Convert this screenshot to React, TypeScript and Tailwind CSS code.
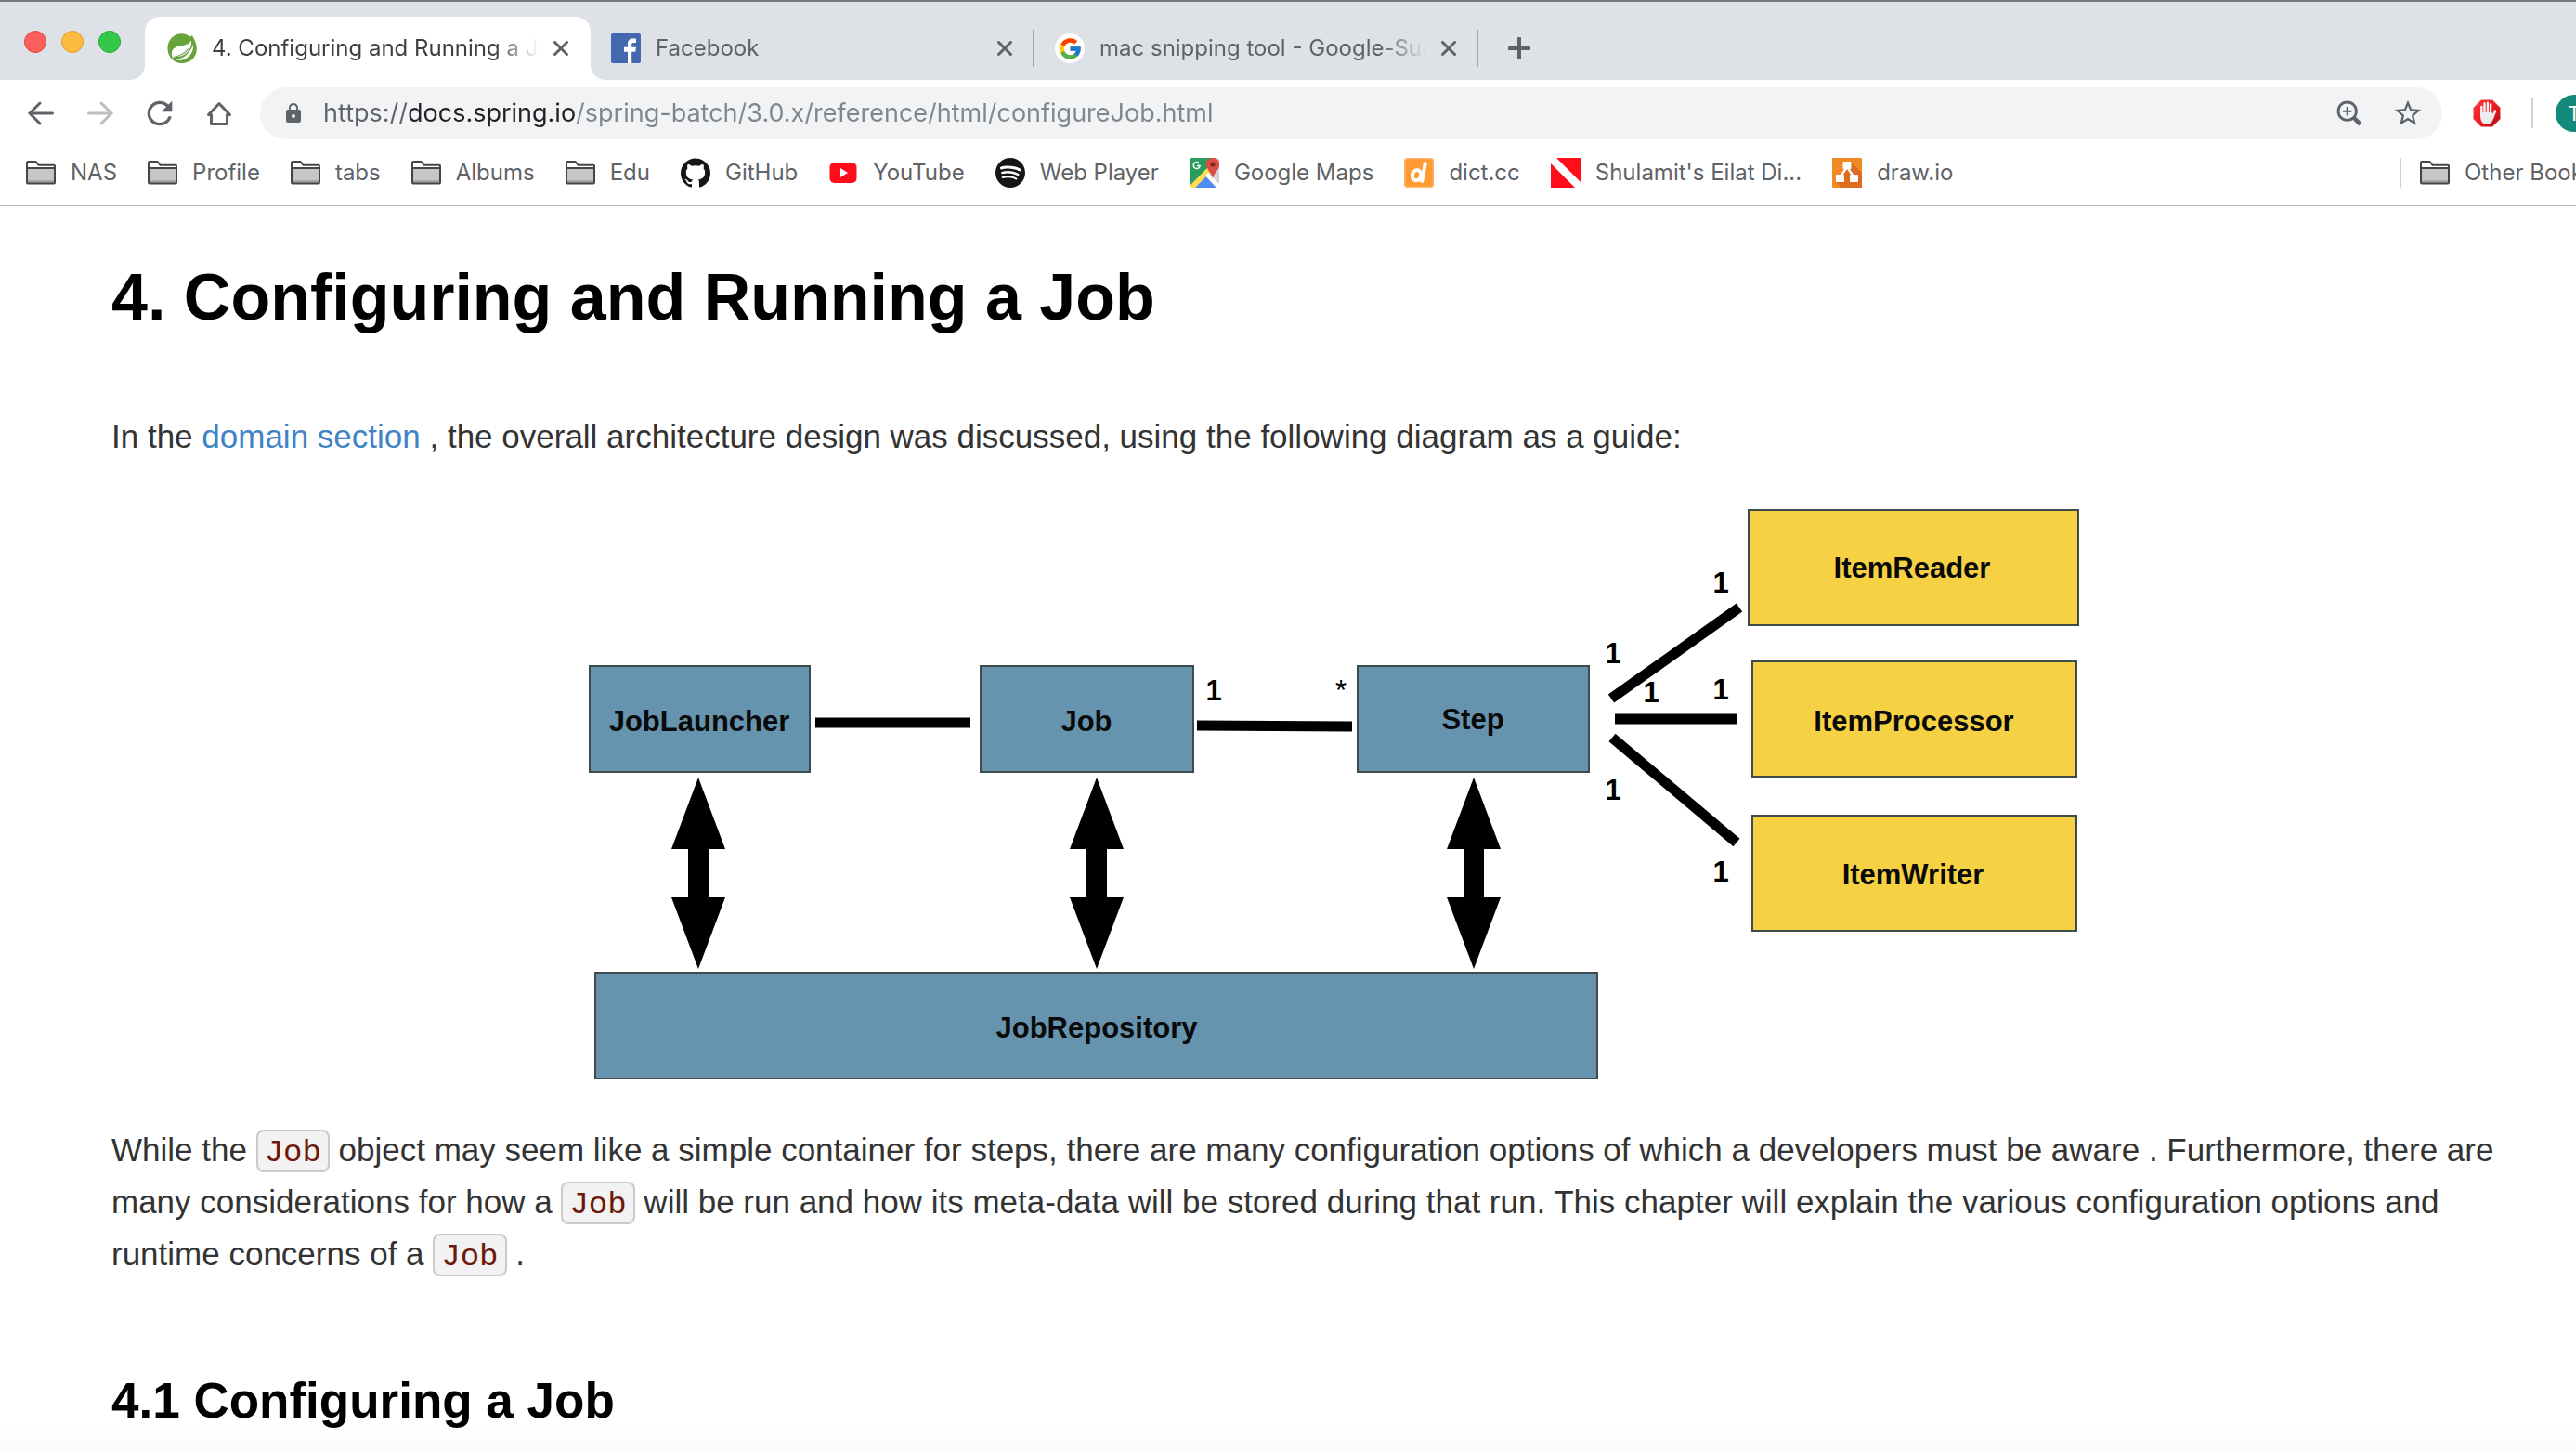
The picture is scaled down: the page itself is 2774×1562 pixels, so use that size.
import type { ReactNode } from "react";
import { FcGoogle } from "react-icons/fc";
import { MdLock, MdRefresh, MdStarBorder } from "react-icons/md";
import { SiGithub, SiSpotify } from "react-icons/si";

/* ---------- icons ---------- */

function SpringIcon() {
  return (
    <svg viewBox="0 0 32 32" className="size-8 shrink-0" aria-hidden="true">
      <path
        d="M27 2c.8 1.400 1.300 2.500 1.700 3.500C33 13 33 22 27.500 27.500 21 33.500 10 33.500 4.500 27-1 20.500-.8 11 4.500 5 9.500-.5 18-1.500 24.500 3.500 25.700 3 26.500 2.600 27 2Z"
        fill="#66a33b"
      />
      <path d="M5 23.500C4 17 8 14.500 14 13.500 20 12.500 24 11 26 7.500c.6 6-1.500 10.500-6 14-3.500 2.700-7.500 4-11.500 3.500L6 26.500Z" fill="#fff" />
      <path d="M28 12c1 7-3.500 14-11 16.200-3 .8-6 .7-8.500-.4C17 27.500 24 22.500 28 12Z" fill="#fff" />
      <path d="M7 25.500C14 24 19 21.500 23 16.500" stroke="#66a33b" strokeWidth="1.200" fill="none" />
    </svg>
  );
}

function FacebookIcon() {
  return (
    <svg viewBox="0 0 32 32" className="size-8 shrink-0" aria-hidden="true">
      <rect width="32" height="32" rx="2" fill="#4468b0" />
      <path
        d="M18 32V19.700h-4v-4.900h4v-3.700C18 7.500 20.300 5.600 23.700 5.600c1.500 0 2.600.1 3.300.2v4.300h-2.500c-1.900 0-2.300.9-2.300 2.200v2.500h4.700l-.6 4.900h-4.100V32Z"
        fill="#fff"
      />
    </svg>
  );
}

function GoogleIcon() {
  return (
    <span className="flex size-8 shrink-0 items-center justify-center rounded-full bg-white">
      <FcGoogle size={27} aria-hidden="true" />
    </span>
  );
}

function CloseIcon() {
  return (
    <svg viewBox="0 0 16 16" className="size-4" aria-hidden="true">
      <path d="M1.500 1.500 14.500 14.500M14.500 1.500 1.500 14.500" stroke="#5f6368" strokeWidth="3" strokeLinecap="round" />
    </svg>
  );
}

function PlusIcon() {
  return (
    <svg viewBox="0 0 24 24" className="size-6" aria-hidden="true">
      <path d="M12 1.500v21M1.500 12h21" stroke="#5f6368" strokeWidth="4" strokeLinecap="round" />
    </svg>
  );
}

function ArrowIcon({ forward = false }: { forward?: boolean }) {
  return (
    <svg viewBox="0 0 32 32" className="size-8" aria-hidden="true">
      <path
        d={forward ? "M3.500 16h24M17 5l11 11-11 11" : "M28.500 16h-24M15 5 4 16l11 11"}
        stroke={forward ? "#bcbdbf" : "#5f6368"}
        strokeWidth="3"
        strokeLinecap="round"
        fill="none"
      />
    </svg>
  );
}

function HomeIcon() {
  return (
    <svg viewBox="0 0 32 32" className="size-8" aria-hidden="true">
      <path d="M4.500 17.500 16 5.500l11.500 12H24.500v10h-17v-10Z" stroke="#5f6368" strokeWidth="3" strokeLinejoin="round" fill="none" />
    </svg>
  );
}

function ZoomIcon() {
  return (
    <svg viewBox="0 0 32 32" className="size-8" aria-hidden="true" stroke="#5f6368" fill="none">
      <circle cx="13.700" cy="13.700" r="9.700" strokeWidth="2.800" />
      <path d="M13.700 9v9.400M9 13.700h9.400" strokeWidth="2" />
      <path d="m20.500 20.500 7.300 7.300" strokeWidth="4.500" />
    </svg>
  );
}

function StopHandIcon() {
  return (
    <svg viewBox="0 0 30 30" className="size-[30px]" aria-hidden="true">
      <defs>
        <linearGradient id="stop" x1="0" y1="0" x2="1" y2="1">
          <stop offset="0" stopColor="#ff3b3b" />
          <stop offset=".6" stopColor="#e8141c" />
          <stop offset="1" stopColor="#a50d12" />
        </linearGradient>
      </defs>
      <path d="M9 .5h12l8.500 8.500v12L21 29.500H9L.5 21V9Z" fill="url(#stop)" stroke="#d9a0a0" strokeWidth=".6" />
      <g stroke="#f4f4f4" strokeLinecap="round" fill="none">
        <path d="M9.300 8v9M12.500 4.500v12M15.900 3.700v12M19.100 5.500v11" strokeWidth="2.400" />
        <path d="m24 12.500-3 7.500" strokeWidth="2.600" />
      </g>
      <path d="M8.100 14h12.200l2.500 3.500c-1 5-2.800 9.500-7.800 9.500-5.500 0-6.900-5-6.900-9Z" fill="#ededed" />
    </svg>
  );
}

function FolderIcon() {
  return (
    <svg viewBox="0 0 32 32" className="size-8 shrink-0" aria-hidden="true">
      <path d="M1 26.500V5c0-.6.400-1 1-1h8.500l3 3.800H30c.6 0 1 .4 1 1v17.700c0 .6-.4 1-1 1H2c-.6 0-1-.4-1-1Z" fill="#fff" />
      <path d="M1 11h30v16H1Z" fill="#c6c6c6" />
      <path d="M1 24h30v3H1Z" fill="#a3a3a3" />
      <path
        d="M1 26.500V5c0-.6.400-1 1-1h8.500l3 3.800H30c.6 0 1 .4 1 1v17.700c0 .6-.4 1-1 1H2c-.6 0-1-.4-1-1ZM1 11h30"
        stroke="#454545"
        strokeWidth="2"
        fill="none"
      />
    </svg>
  );
}

function YouTubeIcon() {
  return (
    <svg viewBox="0 0 32 32" className="size-8 shrink-0" aria-hidden="true">
      <rect x="1.500" y="5" width="29" height="22" rx="5" fill="#ff0d1b" />
      <path d="m13 11 8 5-8 5Z" fill="#fff" />
    </svg>
  );
}

function MapsIcon() {
  return (
    <svg viewBox="0 0 32 32" className="size-8 shrink-0" aria-hidden="true">
      <defs>
        <clipPath id="maps">
          <rect width="32" height="32" rx="3" />
        </clipPath>
      </defs>
      <g clipPath="url(#maps)">
        <rect width="32" height="32" fill="#d3d3d3" />
        <path d="M0 0h24v8L0 32Z" fill="#2a9c5d" />
        <path d="M2 32 16 18.500 29 32Z" fill="#4e8df5" />
        <path d="m-1 31 21-21 3 5L4 34Z" fill="#fddc4f" />
        <path d="m17 19 3-3 14 14v4h-3Z" fill="#fff" />
        <path d="M25 23c-.7-5-3-7-5.200-10.500C15.500 6 19 0 25 0s9.800 6 5.400 12.500C28 16 25.700 18 25 23Z" fill="#dc4c40" />
        <circle cx="25" cy="7" r="2.500" fill="#7c2721" />
      </g>
      <path d="M10.300 5.700A3.500 3.500 0 1 0 11.200 8.500H8" stroke="#fff" strokeWidth="1.500" fill="none" />
    </svg>
  );
}

function DictIcon() {
  return (
    <svg viewBox="0 0 32 32" className="size-8 shrink-0" aria-hidden="true">
      <rect x=".7" y=".7" width="30.600" height="30.600" rx="2.500" fill="#ff9933" stroke="#ffb368" strokeWidth="1.400" />
      <g stroke="#fff" strokeWidth="4" fill="none">
        <ellipse cx="13.500" cy="18.700" rx="4.600" ry="5.600" transform="rotate(14 13.500 18.700)" />
        <path d="m23 4.500-4 22" />
      </g>
    </svg>
  );
}

function DiveFlagIcon() {
  return (
    <svg viewBox="0 0 32 32" className="size-8 shrink-0" aria-hidden="true">
      <path d="M0 6v26h26ZM6 0h26v26Z" fill="#ff0d1b" />
    </svg>
  );
}

function DrawIoIcon() {
  return (
    <svg viewBox="0 0 32 32" className="size-8 shrink-0" aria-hidden="true">
      <rect width="32" height="32" rx="1" fill="#f08a24" />
      <path d="m20 4 12 12v16H10l-6-6 8-9Z" fill="#de6c1e" />
      <path d="M16 10 9 20M16 10l7 10" stroke="#fff" strokeWidth="2.400" />
      <g fill="#fff">
        <rect x="11.500" y="4" width="9" height="8" rx="1" />
        <rect x="4" y="18" width="9" height="8" rx="1" />
        <rect x="19" y="18" width="9" height="8" rx="1" />
      </g>
    </svg>
  );
}

/* ---------- browser chrome ---------- */

function TabFlare({ side }: { side: "left" | "right" }) {
  return (
    <svg
      viewBox="0 0 16 16"
      className={side === "left" ? "absolute bottom-0 -left-4 size-4" : "absolute -right-4 bottom-0 size-4"}
      aria-hidden="true"
    >
      <path d={side === "left" ? "M16 0v16H0A16 16 0 0 0 16 0Z" : "M0 0v16h16A16 16 0 0 1 0 0Z"} fill="#fff" />
    </svg>
  );
}

function Tab({ icon, title, active = false }: { icon: ReactNode; title: string; active?: boolean }) {
  return (
    <div
      role="tab"
      aria-selected={active}
      className={
        active
          ? "relative flex h-[68px] w-[480px] min-w-0 items-center gap-4 rounded-t-2xl bg-white px-6 text-[#3c4043]"
          : "flex h-[68px] w-[478px] min-w-0 items-center text-[#5f6368]"
      }
    >
      {active ? (
        <>
          <TabFlare side="left" />
          <TabInner icon={icon} title={title} />
          <TabFlare side="right" />
        </>
      ) : (
        <div className="flex h-10 min-w-0 flex-1 items-center gap-4 border-r-2 border-[#a2a5aa] px-[22px]">
          <TabInner icon={icon} title={title} />
        </div>
      )}
    </div>
  );
}

function TabInner({ icon, title }: { icon: ReactNode; title: string }) {
  return (
    <>
      {icon}
      <span className="min-w-0 flex-1 overflow-hidden whitespace-nowrap [mask-image:linear-gradient(to_right,#000_calc(100%-48px),transparent)]">
        {title}
      </span>
      <button type="button" aria-label={`Close ${title}`}>
        <CloseIcon />
      </button>
    </>
  );
}

function TabStrip() {
  return (
    <div className="flex h-[84px] items-end bg-[#dee1e6] text-[24px]">
      <div className="flex w-[156px] shrink-0 gap-4 self-start pt-[31px] pl-[26px]">
        <button type="button" aria-label="Close window" className="size-6 rounded-full border border-[#e2463f] bg-[#fc605b]" />
        <button type="button" aria-label="Minimize window" className="size-6 rounded-full border border-[#dfa023] bg-[#fdbc40]" />
        <button type="button" aria-label="Zoom window" className="size-6 rounded-full border border-[#1fac2c] bg-[#34c84a]" />
      </div>
      <div role="tablist" className="flex min-w-0">
        <Tab active icon={<SpringIcon />} title="4. Configuring and Running a Job" />
        <Tab icon={<FacebookIcon />} title="Facebook" />
        <Tab icon={<GoogleIcon />} title="mac snipping tool - Google-Suche" />
      </div>
      <button type="button" aria-label="New tab" className="ml-8 flex h-[68px] items-center">
        <PlusIcon />
      </button>
    </div>
  );
}

function NavButton({ label, children }: { label: string; children: ReactNode }) {
  return (
    <button type="button" aria-label={label} className="flex size-10 items-center justify-center text-[#5f6368]">
      {children}
    </button>
  );
}

function Toolbar() {
  return (
    <div className="flex items-center overflow-hidden bg-white py-2 pl-6">
      <div className="flex shrink-0 gap-6">
        <NavButton label="Back">
          <ArrowIcon />
        </NavButton>
        <NavButton label="Forward">
          <ArrowIcon forward />
        </NavButton>
        <NavButton label="Reload">
          <MdRefresh size={40} />
        </NavButton>
        <NavButton label="Home">
          <HomeIcon />
        </NavButton>
      </div>
      <div className="ml-6 flex h-14 min-w-0 flex-1 items-center rounded-full bg-[#f1f3f4] pr-5 pl-6 text-[#5f6368]">
        <MdLock size={24} className="shrink-0" aria-hidden="true" />
        <input
          type="text"
          aria-label="Address"
          defaultValue="https://docs.spring.io/spring-batch/3.0.x/reference/html/configureJob.html"
          className="ml-5 min-w-0 flex-1 bg-[linear-gradient(to_right,#5f6368_93px,#202124_93px,#202124_273px,#80868b_273px)] bg-clip-text text-[27px] text-transparent caret-black outline-none"
        />
        <button type="button" aria-label="Zoom level">
          <ZoomIcon />
        </button>
        <button type="button" aria-label="Bookmark this page" className="ml-[30px]">
          <MdStarBorder size={34} />
        </button>
      </div>
      <button type="button" aria-label="Ad blocker" className="ml-[33px] shrink-0">
        <StopHandIcon />
      </button>
      <span className="ml-[33px] h-8 w-0.5 shrink-0 bg-[#cfcfcf]" />
      <div className="ml-6 w-[22px] shrink-0 overflow-hidden">
        <button
          type="button"
          aria-label="Profile"
          className="flex size-10 items-center justify-center rounded-full bg-[#12897b] text-[22px] text-white"
        >
          T
        </button>
      </div>
    </div>
  );
}

const bookmarks: { label: string; icon: ReactNode }[] = [
  { label: "NAS", icon: <FolderIcon /> },
  { label: "Profile", icon: <FolderIcon /> },
  { label: "tabs", icon: <FolderIcon /> },
  { label: "Albums", icon: <FolderIcon /> },
  { label: "Edu", icon: <FolderIcon /> },
  { label: "GitHub", icon: <SiGithub size={32} color="#151513" className="shrink-0" /> },
  { label: "YouTube", icon: <YouTubeIcon /> },
  { label: "Web Player", icon: <SiSpotify size={32} color="#151513" className="shrink-0" /> },
  { label: "Google Maps", icon: <MapsIcon /> },
  { label: "dict.cc", icon: <DictIcon /> },
  { label: "Shulamit's Eilat Di...", icon: <DiveFlagIcon /> },
  { label: "draw.io", icon: <DrawIoIcon /> },
];

function BookmarkLink({ label, icon }: { label: string; icon: ReactNode }) {
  return (
    <a href="#" className="flex h-8 shrink-0 items-center gap-4 whitespace-nowrap">
      {icon}
      {label}
    </a>
  );
}

function BookmarksBar() {
  return (
    <nav className="flex items-center overflow-hidden border-b border-[#b2b5b8] bg-white pt-3 pb-[19px] pl-7 text-[24px] text-[#5f6368]">
      <div className="flex min-w-0 flex-1 gap-[33px] overflow-hidden">
        {bookmarks.map((b) => (
          <BookmarkLink key={b.label} label={b.label} icon={b.icon} />
        ))}
      </div>
      <div className="w-[190px] shrink-0 overflow-hidden border-l-2 border-[#d0d0d0] pl-5">
        <BookmarkLink label="Other Bookmarks" icon={<FolderIcon />} />
      </div>
    </nav>
  );
}

/* ---------- architecture diagram ---------- */

const boxes = [
  { label: "JobLauncher", x: 3, y: 171, w: 237, h: 114, tx: 121, ty: 241, fill: "#6694ae" },
  { label: "Job", x: 424, y: 171, w: 229, h: 114, tx: 538, ty: 241, fill: "#6694ae" },
  { label: "Step", x: 830, y: 171, w: 249, h: 114, tx: 954, ty: 239, fill: "#6694ae" },
  { label: "JobRepository", x: 9, y: 501, w: 1079, h: 114, tx: 549, ty: 571, fill: "#6694ae" },
  { label: "ItemReader", x: 1251, y: 3, w: 355, h: 124, tx: 1427, ty: 76, fill: "#f6d144" },
  { label: "ItemProcessor", x: 1255, y: 166, w: 349, h: 124, tx: 1429, ty: 241, fill: "#f6d144" },
  { label: "ItemWriter", x: 1255, y: 332, w: 349, h: 124, tx: 1428, ty: 406, fill: "#f6d144" },
];

const links = [
  [246, 232, 413, 232],
  [657, 235, 824, 236],
  [1103, 206, 1241, 108],
  [1107, 228, 1239, 228],
  [1104, 248, 1238, 361],
];

const ones = [
  [675, 208],
  [1221, 92],
  [1105, 168],
  [1146, 210],
  [1221, 207],
  [1105, 315],
  [1221, 403],
];

function Diagram() {
  return (
    <svg
      viewBox="0 0 1608 616"
      className='mx-auto mt-12 block h-auto w-[1608px] max-w-full font-["Liberation_Sans",Arial,sans-serif]'
      role="img"
      aria-label="Job architecture diagram"
    >
      {boxes.map((b) => (
        <g key={b.label}>
          <rect x={b.x} y={b.y} width={b.w} height={b.h} fill={b.fill} stroke="#3f4a4c" strokeWidth="2" />
          <text x={b.tx} y={b.ty} textAnchor="middle" fontSize="31" fontWeight="700" fill="#0a0a0a">
            {b.label}
          </text>
        </g>
      ))}
      {links.map(([x1, y1, x2, y2]) => (
        <line key={`${x1}-${y1}`} x1={x1} y1={y1} x2={x2} y2={y2} stroke="#000" strokeWidth="11" />
      ))}
      {[120, 549, 955].map((x) => (
        <path key={x} d={`M${x} 291l29 77h-18v52h18l-29 77-29-77h18v-52h-18Z`} fill="#000" />
      ))}
      {ones.map(([x, y]) => (
        <text key={`${x}-${y}`} x={x} y={y} textAnchor="middle" fontSize="31" fontWeight="700">
          1
        </text>
      ))}
      <text x="812" y="208" textAnchor="middle" fontSize="31">
        *
      </text>
    </svg>
  );
}

/* ---------- page ---------- */

function Code({ children }: { children: ReactNode }) {
  return (
    <code className='rounded-lg border-2 border-[#cacaca] bg-[#f2f2f2] px-[7px] pt-1 font-["Liberation_Mono",monospace] text-[34px] leading-none text-[#6d180b]'>
      {children}
    </code>
  );
}

export default function App() {
  return (
    <div className='flex min-h-screen flex-col overflow-hidden bg-[linear-gradient(to_top,#fafafa,#fff_32px)] font-["Inter",sans-serif]'>
      <header className="border-t-2 border-[#77797b]">
        <TabStrip />
        <Toolbar />
        <BookmarksBar />
      </header>
      <main className='pt-14 pr-[22px] pb-5 pl-[120px] font-["Liberation_Sans",Arial,sans-serif] text-[35px] leading-[56px] text-[#333]'>
        <h1 className="text-[70px] leading-[84px] font-bold text-black">4. Configuring and Running a Job</h1>
        <p className="mt-20">
          In the{" "}
          <a href="#" className="text-[#4183c4]">
            domain section
          </a>{" "}
          , the overall architecture design was discussed, using the following diagram as a guide:
        </p>
        <Diagram />
        <p className="mt-12 pr-4">
          While the <Code>Job</Code> object may seem like a simple container for steps, there are many configuration
          options of which a developers must be aware . Furthermore, there are many considerations for how a{" "}
          <Code>Job</Code> will be run and how its meta-data will be stored during that run. This chapter will explain
          the various configuration options and runtime concerns of a <Code>Job</Code> .
        </p>
        <h2 className="mt-24 text-[53px] leading-[68px] font-bold text-black">4.1 Configuring a Job</h2>
      </main>
    </div>
  );
}
